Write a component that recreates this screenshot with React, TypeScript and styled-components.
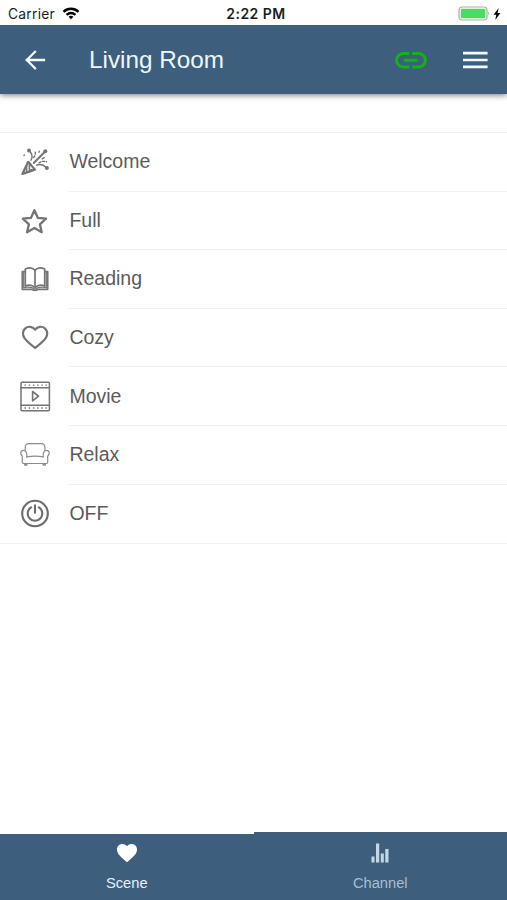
import React from 'react';
import styled, { createGlobalStyle } from 'styled-components';

const GlobalStyle = createGlobalStyle`
  * { box-sizing: border-box; }
  body { margin: 0; background: #fff; font-family: "Liberation Sans", Arial, sans-serif; }
`;

const Screen = styled.div`
  width: 100%;
  height: 900px;
  display: flex;
  flex-direction: column;
  background: #fff;
  overflow: hidden;
`;

const StatusBar = styled.div`
  height: 25px;
  flex: none;
  display: grid;
  grid-template-columns: 1fr auto 1fr;
  align-items: center;
  padding: 2px 6px 0 8px;
  position: relative;
  z-index: 1;
  background: #fff;
  font-family: Inter, sans-serif;
  font-size: 13.8px;
  letter-spacing: 0.25px;
  line-height: 20px;
  color: #1c1c1c;
`;

const StatusGroup = styled.div<{ $end?: boolean }>`
  display: flex;
  align-items: center;
  gap: ${(p) => (p.$end ? 3 : 7)}px;
  justify-content: ${(p) => (p.$end ? 'flex-end' : 'flex-start')};
`;

const Clock = styled.span`
  font-weight: 600;
  font-size: 14px;
  letter-spacing: 0.45px;
  padding-left: 3px;
`;

const Header = styled.header`
  height: 69px;
  flex: none;
  display: flex;
  align-items: center;
  padding: 0 18px 0 22px;
  background: #3d5e7c;
  box-shadow: 0 1px 6px rgba(0, 0, 0, 0.55);
`;

const Title = styled.h1`
  flex: 1;
  margin: 0 0 0 39px;
  font-size: 24.3px;
  font-weight: 400;
  line-height: 32px;
  color: #eef6fc;
`;

const IconButton = styled.button<{ $gap?: number }>`
  display: flex;
  border: 0;
  padding: 0;
  background: none;
  margin-left: ${(p) => p.$gap ?? 0}px;
`;

const SceneList = styled.ul`
  list-style: none;
  margin: 38px 0 0;
  padding: 0;
  border-top: 1px solid #f1f1f1;
  border-bottom: 1px solid #f1f1f1;
`;

const SceneRow = styled.li`
  display: flex;
  align-items: center;
  height: 58.6px;
  padding-left: 19px;
  gap: 17px;
`;

const SceneLabel = styled.span`
  flex: 1;
  display: flex;
  align-items: center;
  height: 100%;
  padding-left: 1.4px;
  font-size: 19.5px;
  color: #5b5b5b;
  border-bottom: 1px solid #f1f1f1;

  ${SceneRow}:last-child & {
    border-bottom-color: transparent;
  }
`;

const Glyph = styled.svg<{ $tone?: string; $weight?: number }>`
  display: block;
  flex: none;
  fill: none;
  stroke: ${(p) => p.$tone ?? '#747474'};
  stroke-width: ${(p) => p.$weight ?? 2};
  stroke-linecap: round;
  stroke-linejoin: round;
`;

const Tabs = styled.nav`
  display: flex;
  align-items: flex-end;
  height: 68px;
  margin-top: auto;
  flex: none;
`;

const Tab = styled.button<{ $active?: boolean }>`
  flex: 1;
  height: ${(p) => (p.$active ? 66 : 68)}px;
  display: flex;
  flex-direction: column;
  align-items: center;
  justify-content: flex-end;
  gap: 11px;
  padding: 0 0 8px;
  border: 0;
  background: #3d5e7c;
  font-family: inherit;
  font-size: 14.7px;
  line-height: 18px;
  color: ${(p) => (p.$active ? '#e6f0f9' : '#a6bfd4')};
`;

const icons: Record<string, React.ReactNode> = {
  Welcome: (
    <Glyph width="32" height="32" viewBox="0 0 32 32" $weight={1.4}>
      <path d="M9.2 15.8 3.4 28 16 23.6Z" strokeWidth="2.2" />
      <path d="M7.6 20v5.400M10.400 17.500v7.200l2.800-1.200" strokeWidth="1.600" />
      <path d="M14.800 17 25.400 6.300" strokeWidth="2" />
      <path d="M12 14.200c1.800-3.300 1.200-6.500-1.300-9M17.600 19.200c3.800-1.600 7.200-.3 9.500 2.400" />
      <path d="M14.500 11.500c1.600-1.500 2-3.500 1.800-5.500M20 16.800c2.600-1.800 5-1.600 7.500-1" strokeDasharray="2 1.800" />
      <path d="M20 6.200l.2-1.100M23.200 12.800l2-1.200M5 9.600l.4-.6" />
      <g fill="#747474" stroke="none">
        <circle cx="10" cy="4.500" r="2" />
        <circle cx="26.300" cy="5.300" r="2" />
        <circle cx="27.900" cy="22" r="2" />
      </g>
    </Glyph>
  ),
  Full: (
    <Glyph width="32" height="32" viewBox="0 0 32 32" $weight={2.3}>
      <path d="M15.400 5.200 18.900 12.900 27 13.700 20.900 19.300 22.700 27.200 15.400 23 8.100 27.200 9.900 19.300 3.800 13.700 11.900 12.900Z" />
    </Glyph>
  ),
  Reading: (
    <Glyph width="32" height="32" viewBox="0 0 32 32" $weight={1.700}>
      <path d="M16 7.200C13.400 4.400 10 4.300 6.300 6v17c3.700-1.600 7.200-1.300 9.700 1.800 2.500-3.100 6-3.400 9.700-1.800V6C22 4.300 18.600 4.400 16 7.200Z" />
      <path d="M16 7.200v17" />
      <path d="M5.500 8.700H3.300v17.600h9.400c1.300 1.500 5.300 1.500 6.600 0h9.400V8.700h-2.200" />
      <path d="M4.700 9v15.600c4-.8 8-1 11.300 1.800 3.300-2.800 7.300-2.600 11.300-1.800V9" strokeWidth="1.200" />
    </Glyph>
  ),
  Cozy: (
    <Glyph width="32" height="32" viewBox="0 0 32 32" $weight={2.2}>
      <path d="M16.100 7.700C13.500 4.100 9 4 6.300 6.300 3.400 8.800 3.300 13 5.500 16.100c2.400 3.400 6.400 6.500 10.600 9.900 4.200-3.400 8.200-6.500 10.600-9.900 2.200-3.100 2.100-7.300-.8-9.800-2.700-2.300-7.200-2.200-9.800 1.400Z" />
    </Glyph>
  ),
  Movie: (
    <Glyph width="32" height="32" viewBox="0 0 32 32" $weight={1.500}>
      <rect x="2" y="1.300" width="28.400" height="28.400" rx="1" />
      <path d="M2 6.800h28.400M2 24.200h28.400" />
      <path d="M5.500 4.100h23M5.500 27h23" strokeDasharray="1.500 2.700" strokeWidth="1.300" strokeLinecap="butt" />
      <path d="m13.600 10.500 6 4.700-6 4.700Z" strokeWidth="1.600" />
    </Glyph>
  ),
  Relax: (
    <Glyph width="32" height="32" viewBox="0 0 32 32" $weight={1.200} $tone="#8c8c8c">
      <path d="M6.200 11.200V8.700C6.200 6 7.500 4.700 10 4.700h12c2.500 0 3.900 1.300 3.900 4v2.500" />
      <path d="M7.800 18c.4-3-.3-6.700-3.200-6.700-3.300 0-3.800 4-1.300 5.600v6.400c0 .8.400 1.200 1.200 1.200h23c.8 0 1.200-.4 1.200-1.200v-6.400c2.500-1.600 2-5.600-1.300-5.600-2.900 0-3.600 3.700-3.200 6.700" />
      <path d="M7.800 17.800c5.500-1 10.900-1 16.400 0" />
      <path d="M5.800 24.800v1.300h2v-1.300M24.200 24.800v1.300h2v-1.300" strokeWidth="1.500" />
    </Glyph>
  ),
  OFF: (
    <Glyph width="32" height="32" viewBox="0 0 32 32" $weight={2.100} $tone="#6c6c6c">
      <circle cx="16" cy="15.500" r="12.800" />
      <path d="M12.100 9.300a7.300 7.300 0 1 0 7.800 0M16 7.200v7.600" />
    </Glyph>
  ),
};

const scenes = ['Welcome', 'Full', 'Reading', 'Cozy', 'Movie', 'Relax', 'OFF'];

export default function App() {
  return (
    <Screen>
      <GlobalStyle />
      <StatusBar>
        <StatusGroup>
          <span>Carrier</span>
          <Glyph width="18" height="13" viewBox="0 0 18 13" $tone="#000" $weight={2.400}>
            <path d="M1.500 4.800c4.300-4 10.700-4 15 0M4.500 7.900c2.800-2.500 6.200-2.500 9 0" strokeLinecap="butt" />
            <path d="M6.600 9.700c1.500-1.200 3.300-1.200 4.800 0L9 12.300Z" fill="#000" stroke="none" />
          </Glyph>
        </StatusGroup>
        <Clock>2:22 PM</Clock>
        <StatusGroup $end>
          <Glyph width="32" height="15" viewBox="0 0 32 15" $tone="#a9a9a9" $weight={1.200}>
            <rect x="1" y="1" width="28" height="13" rx="3.200" />
            <rect x="2.700" y="2.700" width="24.600" height="9.600" rx="1.200" fill="#4cd964" stroke="none" />
            <path d="M30.300 5.500c1.300.8 1.300 3.200 0 4Z" fill="#a9a9a9" stroke="none" />
          </Glyph>
          <Glyph width="8" height="12" viewBox="0 0 8 12">
            <path d="M5.600 0 .6 6.700h2.700L2.200 12l5.200-7H4.600Z" fill="#000" stroke="none" />
          </Glyph>
        </StatusGroup>
      </StatusBar>
      <Header>
        <IconButton aria-label="Back">
          <Glyph width="28" height="24" viewBox="0 0 28 24" $tone="#f3f9fd" $weight={2.300}>
            <path d="M13 3.800 4.800 12l8.200 8.300M4.800 12h17.200" strokeLinecap="square" strokeLinejoin="miter" />
          </Glyph>
        </IconButton>
        <Title>Living Room</Title>
        <IconButton aria-label="Connection">
          <Glyph width="34" height="20" viewBox="0 0 34 20" $tone="#10b414" $weight={3}>
            <path d="M15.400 3.500H9.300a6.700 6.700 0 0 0 0 13.400H15.400M18.200 3.500h6.500a6.700 6.700 0 0 1 0 13.400H18.200M10 10.200h13.700" strokeLinecap="butt" />
          </Glyph>
        </IconButton>
        <IconButton aria-label="Menu" $gap={33}>
          <Glyph width="28" height="20" viewBox="0 0 28 20" $tone="#f3f9fd" $weight={2.700}>
            <path d="M2 3.200h24.600M2 10h24.600M2 16.800h24.600" strokeLinecap="butt" />
          </Glyph>
        </IconButton>
      </Header>
      <SceneList>
        {scenes.map((name) => (
          <SceneRow key={name}>
            {icons[name]}
            <SceneLabel>{name}</SceneLabel>
          </SceneRow>
        ))}
      </SceneList>
      <Tabs>
        <Tab $active>
          <Glyph width="22" height="20" viewBox="0 0 22 20">
            <path d="M11 19.300 9.500 18C4 13.100 1 10.400 1 6.400 1 3.200 3.400 1 6.400 1 8.200 1 9.900 1.900 11 3.300 12.100 1.900 13.800 1 15.600 1c3 0 5.400 2.200 5.400 5.400 0 4-3 6.700-8.500 11.600Z" fill="#fff" stroke="none" />
          </Glyph>
          <span>Scene</span>
        </Tab>
        <Tab>
          <Glyph width="18" height="20" viewBox="0 0 18 20">
            <path d="M.500 13.500h3v6h-3ZM5 .500h3.200v19H5ZM9.800 10.500h3v9h-3ZM14.300 6h3.200v13.500h-3.200Z" fill="#c5d7e7" stroke="none" />
          </Glyph>
          <span>Channel</span>
        </Tab>
      </Tabs>
    </Screen>
  );
}
